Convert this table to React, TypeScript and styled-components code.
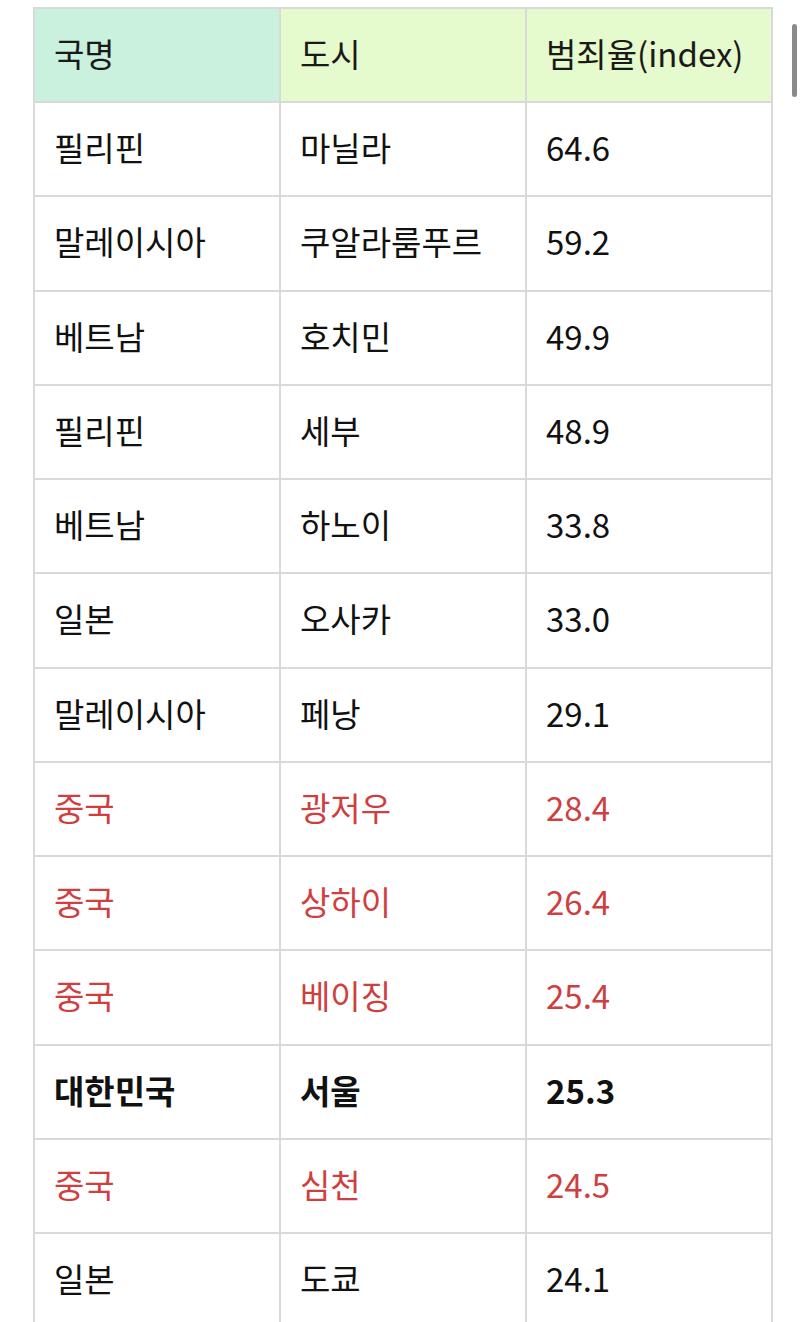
import React from "react";
import styled, { createGlobalStyle } from "styled-components";

interface Row {
    country: string;
    city: string;
    index: string;
    tone?: "red" | "bold";
}

const GlobalStyle = createGlobalStyle`
    html, body {
        margin: 0;
        padding: 0;
        background: #fff;
        overflow: hidden;
    }
    body {
        font-family: "Noto Sans CJK KR", "Noto Sans", sans-serif;
    }
`;

const Page = styled.div`
    position: relative;
    width: 800px;
    height: 1322px;
    padding: 7px 0 0 33px;
    box-sizing: border-box;
    overflow: hidden;
`;

const Table = styled.table`
    border-collapse: collapse;
    table-layout: fixed;
    width: 740px;
`;

const HeadCell = styled.th<{ $mint?: boolean }>`
    width: 246px;
    height: 94px;
    padding: 0 0 4px 19px;
    box-sizing: border-box;
    border: 2px solid #d9d9d9;
    background: ${(p) => (p.$mint ? "#c9f1dd" : "#e6fbcd")};
    text-align: left;
    font-weight: 400;
    font-size: 33px;
    color: #1a1a1a;
`;

const Cell = styled.td<{ $tone?: "red" | "bold" }>`
    height: 94.25px;
    padding: 0 0 4px 19px;
    box-sizing: border-box;
    border: 2px solid #d9d9d9;
    font-size: 33px;
    color: ${(p) => (p.$tone === "red" ? "#cf3f3f" : "#111")};
    font-weight: ${(p) => (p.$tone === "bold" ? 700 : 400)};
    white-space: nowrap;
`;

const Scrollbar = styled.div`
    position: absolute;
    top: 24px;
    left: 792px;
    width: 5px;
    height: 73px;
    border-radius: 3px;
    background: #8a8a8a;
`;

const rows: Row[] = [
    { country: "필리핀", city: "마닐라", index: "64.6" },
    { country: "말레이시아", city: "쿠알라룸푸르", index: "59.2" },
    { country: "베트남", city: "호치민", index: "49.9" },
    { country: "필리핀", city: "세부", index: "48.9" },
    { country: "베트남", city: "하노이", index: "33.8" },
    { country: "일본", city: "오사카", index: "33.0" },
    { country: "말레이시아", city: "페낭", index: "29.1" },
    { country: "중국", city: "광저우", index: "28.4", tone: "red" },
    { country: "중국", city: "상하이", index: "26.4", tone: "red" },
    { country: "중국", city: "베이징", index: "25.4", tone: "red" },
    { country: "대한민국", city: "서울", index: "25.3", tone: "bold" },
    { country: "중국", city: "심천", index: "24.5", tone: "red" },
    { country: "일본", city: "도쿄", index: "24.1" },
];

const App = () => (
    <>
        <GlobalStyle />
        <Page>
            <Table>
                <thead>
                    <tr>
                        <HeadCell $mint>국명</HeadCell>
                        <HeadCell>도시</HeadCell>
                        <HeadCell>범죄율(index)</HeadCell>
                    </tr>
                </thead>
                <tbody>
                    {rows.map((r, i) => (
                        <tr key={i}>
                            <Cell $tone={r.tone}>{r.country}</Cell>
                            <Cell $tone={r.tone}>{r.city}</Cell>
                            <Cell $tone={r.tone}>{r.index}</Cell>
                        </tr>
                    ))}
                </tbody>
            </Table>
            <Scrollbar />
        </Page>
    </>
);

export default App;
